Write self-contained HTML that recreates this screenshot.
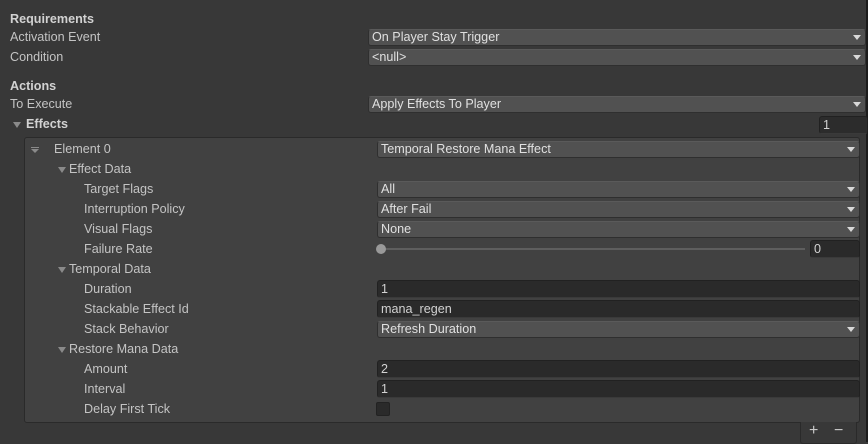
<!DOCTYPE html>
<html><head><meta charset="utf-8"><style>
*{margin:0;padding:0;box-sizing:border-box}
body{width:868px;height:442px;background:#383838;position:relative;overflow:hidden;font-family:"Liberation Sans",sans-serif;font-size:12.6px;color:#c4c4c4}
.a{position:absolute;white-space:nowrap}
.l{position:absolute;white-space:nowrap;line-height:16px}
.b{font-weight:bold;color:#d2d2d2}
.dd{position:absolute;height:17px;background:#515151;border:1px solid #2f2f2f;border-top-color:#5a5a5a;border-radius:3px;padding-left:3px;line-height:15px;color:#e0e0e0;margin-top:1px}
.dd:after{content:"";position:absolute;right:4px;top:5px;border-left:4px solid transparent;border-right:4px solid transparent;border-top:5px solid #d8d8d8}
.tf{position:absolute;height:18px;background:#2a2a2a;border:1px solid #212121;border-bottom-color:#3a3a3a;border-radius:3px;padding-left:3px;line-height:16px;color:#d2d2d2}
.tri{position:absolute;width:0;height:0;border-left:4px solid transparent;border-right:4px solid transparent;border-top:6px solid #8a8a8a}
</style></head><body>
<div style="position:absolute;right:0;top:0;width:2px;height:442px;background:#1c1c1c"></div>
<div class="l b" style="left:10px;top:11px">Requirements</div>
<div class="l" style="left:10px;top:29px">Activation Event</div>
<div class="dd" style="left:368px;top:28px;width:498px">On Player Stay Trigger</div>
<div class="l" style="left:10px;top:49px">Condition</div>
<div class="dd" style="left:368px;top:48px;width:498px">&lt;null&gt;</div>
<div class="l b" style="left:10px;top:78px">Actions</div>
<div class="l" style="left:10px;top:96px">To Execute</div>
<div class="dd" style="left:368px;top:95px;width:498px">Apply Effects To Player</div>
<div class="tri" style="left:13px;top:122px"></div>
<div class="l b" style="left:26px;top:116px">Effects</div>
<div class="tf" style="left:819px;top:116px;width:49px;background:#2c2c2c">1</div>

<div style="position:absolute;left:24px;top:137px;width:836px;height:286px;background:#414141;border:1px solid #2a2a2a;border-radius:3px"></div>
<div style="position:absolute;left:31px;top:147px;width:8px;height:1px;background:#8a8a8a"></div>
<div style="position:absolute;left:31px;top:149px;width:0;border-left:4px solid transparent;border-right:4px solid transparent;border-top:4px solid #8a8a8a"></div>
<div class="l" style="left:54px;top:141px">Element 0</div>
<div class="dd" style="left:377px;top:140px;width:483px">Temporal Restore Mana Effect</div>

<div class="tri" style="left:58px;top:167px"></div>
<div class="l" style="left:69px;top:161px">Effect Data</div>
<div class="l" style="left:84px;top:181px">Target Flags</div>
<div class="dd" style="left:377px;top:180px;width:483px">All</div>
<div class="l" style="left:84px;top:201px">Interruption Policy</div>
<div class="dd" style="left:377px;top:200px;width:483px">After Fail</div>
<div class="l" style="left:84px;top:221px">Visual Flags</div>
<div class="dd" style="left:377px;top:220px;width:483px">None</div>
<div class="l" style="left:84px;top:241px">Failure Rate</div>
<div style="position:absolute;left:380px;top:248px;width:425px;height:2px;background:#5e5e5e"></div>
<div style="position:absolute;left:376px;top:244px;width:10px;height:10px;border-radius:5px;background:#999"></div>
<div class="tf" style="left:810px;top:240px;width:50px">0</div>

<div class="tri" style="left:58px;top:267px"></div>
<div class="l" style="left:69px;top:261px">Temporal Data</div>
<div class="l" style="left:84px;top:281px">Duration</div>
<div class="tf" style="left:377px;top:280px;width:483px">1</div>
<div class="l" style="left:84px;top:301px">Stackable Effect Id</div>
<div class="tf" style="left:377px;top:300px;width:483px">mana_regen</div>
<div class="l" style="left:84px;top:321px">Stack Behavior</div>
<div class="dd" style="left:377px;top:320px;width:483px">Refresh Duration</div>

<div class="tri" style="left:58px;top:347px"></div>
<div class="l" style="left:69px;top:341px">Restore Mana Data</div>
<div class="l" style="left:84px;top:361px">Amount</div>
<div class="tf" style="left:377px;top:360px;width:483px">2</div>
<div class="l" style="left:84px;top:381px">Interval</div>
<div class="tf" style="left:377px;top:380px;width:483px">1</div>
<div class="l" style="left:84px;top:401px">Delay First Tick</div>
<div style="position:absolute;left:376px;top:402px;width:14px;height:14px;background:#2a2a2a;border:1px solid #222;border-radius:2px"></div>

<div style="position:absolute;left:800px;top:422px;width:57px;height:22px;background:#383838;border:1px solid #2a2a2a;border-top:none;border-radius:0 0 3px 3px"></div>
<div class="a" style="left:809px;top:422px;font-size:16px;color:#c8c8c8;line-height:18px">+</div>
<div class="a" style="left:834px;top:422px;font-size:16px;color:#c8c8c8;line-height:18px">−</div>
</body></html>
